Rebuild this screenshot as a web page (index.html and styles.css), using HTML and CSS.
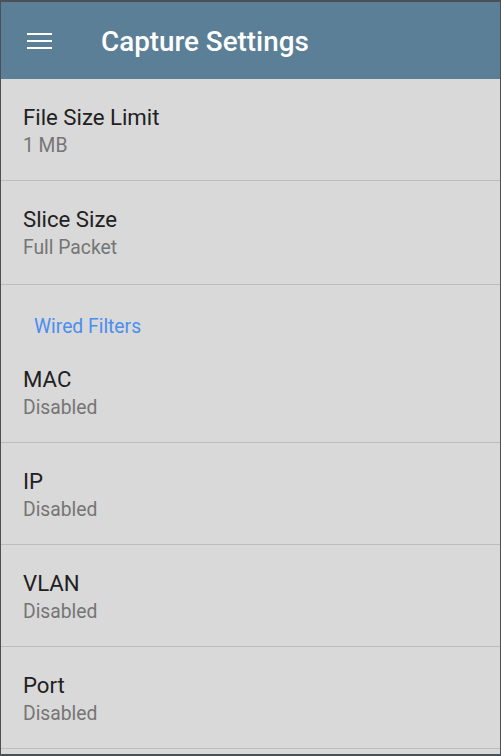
FILE: index.html
```html
<!DOCTYPE html>
<html>
<head>
<meta charset="utf-8">
<link rel="stylesheet" href="styles.css">
</head>
<body>
<div class="frame">
  <header class="appbar">
    <svg class="menu" width="26" height="16" viewBox="0 0 26 16">
      <rect x="0" y="0" width="25" height="2" fill="#fff"/>
      <rect x="0" y="7" width="25" height="2" fill="#fff"/>
      <rect x="0" y="14" width="25" height="2" fill="#fff"/>
    </svg>
    <h1 class="title">Capture Settings</h1>
  </header>
  <div class="list">
    <div class="item">
      <div class="primary">File Size Limit</div>
      <div class="secondary">1 MB</div>
    </div>
    <div class="item">
      <div class="primary">Slice Size</div>
      <div class="secondary">Full Packet</div>
    </div>
    <div class="item section">
      <div class="category">Wired Filters</div>
      <div class="primary">MAC</div>
      <div class="secondary">Disabled</div>
    </div>
    <div class="item">
      <div class="primary">IP</div>
      <div class="secondary">Disabled</div>
    </div>
    <div class="item">
      <div class="primary">VLAN</div>
      <div class="secondary">Disabled</div>
    </div>
    <div class="item">
      <div class="primary">Port</div>
      <div class="secondary">Disabled</div>
    </div>
  </div>
</div>
</body>
</html>
```

FILE: styles.css
```css
html, body {
  margin: 0;
  padding: 0;
  background: #d9d9d9;
}
.frame {
  box-sizing: border-box;
  width: 501px;
  height: 756px;
  border: 1px solid #4b5057;
  border-top-width: 2px;
  border-bottom-width: 2px;
  background: #d9d9d9;
  font-family: Roboto, "Liberation Sans", sans-serif;
  overflow: hidden;
}
.appbar {
  height: 77px;
  background: #5b7f96;
  display: flex;
  align-items: center;
  padding-left: 26px;
}
.menu {
  display: block;
  margin-top: 0;
}
.title {
  margin: 0 0 0 48px;
  color: #ffffff;
  font-size: 27.8px;
  font-weight: 500;
  line-height: 32px;
  margin-top: 3px;
}
.list {
  display: flex;
  flex-direction: column;
}
.item {
  box-sizing: border-box;
  height: 102px;
  border-bottom: 1px solid #bdbdbd;
  padding-left: 22px;
  padding-top: 24.5px;
}
.item:nth-child(2) {
  height: 104px;
}
.section {
  height: 158px;
  padding-top: 31px;
}
.primary {
  color: #212121;
  font-size: 22.2px;
  line-height: 26px;
}
.secondary {
  color: #757575;
  font-size: 19.3px;
  line-height: 22px;
  margin-top: 5px;
}
.category {
  color: #4a8ef0;
  font-size: 19.3px;
  line-height: 22px;
  padding-left: 11px;
  margin-bottom: 27.5px;
}
```
